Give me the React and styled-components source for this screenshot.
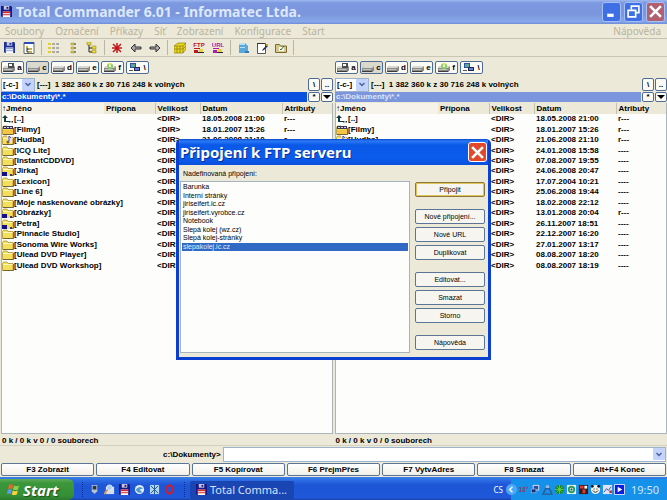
import React from "react";
import styled, { createGlobalStyle, css } from "styled-components";

const face = "#ece9d8";
const uiFont = '"Liberation Sans", Arial, sans-serif';
const titleFont = '"Noto Sans", "Open Sans", sans-serif';

const GlobalStyle = createGlobalStyle`
  * { box-sizing: border-box; }
  body { margin: 0; background: ${face}; }
  button, input, select { font: inherit; color: inherit; margin: 0; padding: 0; }
  svg { display: block; flex: none; }
`;

// --- Styled Components ---
const Screen = styled.div`
  min-height: 100vh;
  display: flex;
  flex-direction: column;
  background: ${face};
  color: #000;
  font: bold 8px/10px ${uiFont};
  white-space: nowrap;
`;

const TitleBar = styled.header`
  display: flex;
  align-items: center;
  gap: 3px;
  height: 24px;
  padding: 0 2px 1px 1px;
  background: linear-gradient(#9db8f0 0, #7c98e0 3px, #7b96dc 60%, #86a8ea 90%, #6f8cd8);
`;

const TitleText = styled.h1`
  flex: 1;
  margin: 0;
  padding-left: 1px;
  font: bold 14px/20px ${titleFont};
  color: #dde8fc;
`;

const CaptionButton = styled.button`
  display: grid;
  place-items: center;
  width: 19px;
  height: 20px;
  border: 1px solid ${(p) => (p.$bright ? "#fff" : "#a9c0f4")};
  border-radius: 3px;
  background: ${(p) => p.$bg};
`;

const MenuBar = styled.nav`
  display: flex;
  gap: 11px;
  height: 14px;
  padding: 0 6px 0 5px;
  font: 10px/13px ${titleFont};
  color: #b9b39c;
`;

const MenuItem = styled.button`
  border: 0;
  background: none;
  ${(p) => p.$end && css`margin-left: auto;`}
`;

const Toolbar = styled.div`
  display: flex;
  align-items: center;
  height: 19px;
  border-top: 1px solid #c5c2b4;
  border-bottom: 1px solid #c9c6b8;
`;

const ToolButton = styled.button`
  display: grid;
  place-items: center;
  width: 19px;
  height: 17px;
  border: 0;
  background: none;
`;

const ToolSeparator = styled.span`
  width: 1px;
  height: 15px;
  margin: 0 2px 0 3px;
  background: #b9b6a6;
`;

const Panels = styled.main`
  flex: 1;
  display: grid;
  grid-template-columns: 1fr 1fr;
  gap: 2px;
  padding: 4px 0 0 1px;
`;

const Panel = styled.section`
  display: flex;
  flex-direction: column;
  min-width: 0;
`;

const Drives = styled.div`
  display: flex;
  gap: 2px;
  height: 16px;
`;

const DriveButton = styled.button`
  display: flex;
  align-items: center;
  justify-content: center;
  gap: 2px;
  width: 23px;
  height: 13px;
  border: 1px solid #4f6d94;
  border-radius: 2px;
  background: ${(p) => (p.$on ? "#dcd9cc" : "#fbfaf5")};
`;

const InfoRow = styled.div`
  display: flex;
  align-items: center;
  gap: 1px;
  height: 15px;
`;

const DriveSelect = styled.div`
  display: flex;
  align-items: center;
  width: 34px;
  height: 14px;
  margin-right: 1px;
  border: 1px solid #9db3cc;
  background: #fff;

  select {
    width: 18px;
    flex: 1;
    height: 12px;
    padding-left: 1px;
    border: 0;
    background: none;
    appearance: none;
  }
`;

const Chevron = styled.span`
  display: grid;
  place-items: center;
  width: 12px;
  height: 12px;
  border-radius: 1px;
  background: #c3d3fb;
  pointer-events: none;
`;

const FreeSpace = styled.span`
  flex: 1;
`;

const SmallButton = styled.button`
  display: grid;
  place-items: center;
  width: 12px;
  height: ${(p) => (p.$tall ? 13 : 10)}px;
  border: 1px solid #4f6d94;
  border-radius: 2px;
  background: #fbfaf5;
  line-height: 8px;
`;

const PathRow = styled.div`
  display: flex;
  gap: 1px;
  height: 11px;
`;

const Path = styled.div`
  flex: 1;
  height: 10px;
  padding-left: 1px;
  color: ${(p) => (p.$active ? "#fff" : "#dbe4fa")};
  background: ${(p) => (p.$active ? "#0a4fe0" : "#7b96dc")};
`;

const FileList = styled.div`
  flex: 1;
  border: 1px solid #a9b4bd;
  border-top: 0;
  background: #fdfefc;
`;

const FileTable = styled.table`
  width: 100%;
  height: 168px;
  table-layout: fixed;
  border-collapse: collapse;

  th, td {
    padding: 0 0 0 2px;
    text-align: left;
    overflow: hidden;
  }
  th {
    height: 11px;
    background: ${face};
    border-left: 1px solid #c5c2b4;
  }
  th:first-child {
    padding-left: 0;
    border-left: 0;
    background: #f5f3ea;
  }
  th:nth-child(2) {
    border-left: 0;
  }
`;

const Name = styled.span`
  display: flex;
  align-items: center;
  height: 10px;
  margin-left: -2px;
`;

const StatusRow = styled.div`
  display: grid;
  grid-template-columns: 1fr 1fr;
  gap: 2px;
  height: 12px;
  padding: 2px 0 0 2px;
  border-bottom: 1px solid #d4d1c2;
`;

const CommandRow = styled.div`
  display: flex;
  align-items: center;
  gap: 2px;
  height: 17px;
  padding-right: 1px;

  label {
    flex: 1;
    text-align: right;
  }
`;

const CommandBox = styled.div`
  flex: 2;
  display: flex;
  height: 15px;
  border: 1px solid #9db3cc;
  background: #fff;

  input {
    flex: 1;
    border: 0;
    outline: 0;
    background: none;
  }
`;

const FunctionKeys = styled.div`
  display: flex;
  gap: 2px;
  padding: 0 1px 1px;
`;

const FunctionKey = styled.button`
  flex: 1;
  height: 13px;
  border: 1px solid #5a7596;
  border-radius: 2px;
  background: linear-gradient(#fff, #f0efe8);
`;

const Taskbar = styled.footer`
  display: flex;
  align-items: center;
  height: 23px;
  padding-top: 2px;
  color: #fff;
  font: 11px/18px ${titleFont};
  background: linear-gradient(#3a80e8 0, #2a68e0 4px, #1d55d6 8px, #1f58da 90%, #1941a5);
`;

const StartButton = styled.button`
  display: flex;
  align-items: center;
  gap: 3px;
  align-self: stretch;
  width: 74px;
  padding-left: 7px;
  border: 0;
  border-radius: 0 6px 6px 0;
  background: linear-gradient(#5eac56 0, #3c963c 4px, #359035 80%, #2a7a2c);
  color: #fff;
  font: italic bold 15px/18px ${titleFont};
  text-shadow: 1px 1px 1px #1d4f1d;
`;

const Grip = styled.span`
  width: 1px;
  height: 15px;
  margin: 0 ${(p) => p.$after}px 0 ${(p) => p.$before}px;
  border-left: 1px dotted #0c2f8f;
`;

const QuickLaunch = styled.div`
  display: flex;
  gap: 4px;
`;

const IconButton = styled.button`
  border: 0;
  background: none;
`;

const TaskButton = styled.button`
  display: flex;
  align-items: center;
  gap: 3px;
  width: 104px;
  height: 18px;
  padding-left: 6px;
  border: 0;
  border-radius: 2px;
  background: #1a46b4;
  color: #d6e2fb;
`;

const Language = styled.span`
  margin-left: auto;
  padding-right: 3px;
  font-size: 8px;
`;

const Tray = styled.div`
  display: flex;
  align-items: center;
  align-self: stretch;
  gap: 1px;
  width: 161px;
  background: linear-gradient(90deg, transparent 5px, #1591ea 5px);
`;

const Clock = styled.time`
  margin-left: 5px;
  color: #cfe6fb;
`;

const Overlay = styled.div`
  position: fixed;
  inset: 0;
  display: grid;
  place-items: center;
  padding-bottom: 1px;
`;

const Dialog = styled.div`
  width: 315px;
  border: solid #0a3fd0;
  border-width: 0 3px 3px 3px;
  border-radius: 5px 5px 0 0;
  background: ${face};
  font: 7px/9px ${uiFont};
  overflow: hidden;
  white-space: nowrap;
`;

const DialogTitle = styled.div`
  display: flex;
  align-items: center;
  justify-content: space-between;
  height: 26px;
  padding: 0 1px;
  background: linear-gradient(#0a45c8 0, #2a7af8 2px, #0a58e6 6px, #0a5cee 70%, #0a50dc);

  h2 {
    margin: 0;
    font: bold 15px/20px ${titleFont};
    color: #fff;
    text-shadow: 1px 1px 0 #0a2f9a;
  }
`;

const DialogBody = styled.div`
  display: grid;
  grid-template-columns: 1fr 70px;
  column-gap: 5px;
  padding: 4px 3px 4px 1px;

  label {
    grid-column: 1 / -1;
    height: 12px;
    padding-left: 3px;
  }
`;

const ConnectionList = styled.select`
  height: 172px;
  padding: 1px;
  border: 1px solid #a5b5c0;
  border-radius: 0;
  outline: 0;
  background: #fdfefc;
  overflow: hidden;

  option {
    height: 8px;
    min-height: 8px;
    padding: 0 1px;
    line-height: 8px;
    font-size: 7px;
  }
  option:nth-child(odd) {
    height: 9px;
  }
  option:checked {
    background: #316ac5 linear-gradient(#316ac5, #316ac5);
    color: #dfeafc;
  }
`;

const DialogButtons = styled.div`
  display: flex;
  flex-direction: column;
  gap: 3px;
  padding-top: 1px;
`;

const DialogButton = styled.button`
  height: 15px;
  margin-top: ${(p) => p.$gap || 0}px;
  border: 1px solid ${(p) => (p.$default ? "#8a7a3c" : "#5a7596")};
  border-radius: 2px;
  background: #f6f5ef;
  ${(p) => p.$default && css`box-shadow: inset 0 0 0 1px #e4c25c;`}
`;

// --- Icons ---
const Disk = ({ size = 11, body = "#17178c", label = "#d42a2a" }) => (
  <svg width={size} height={size} viewBox="0 0 12 12">
    <path d="M0 0h11l1 1v11H1l-1-1z" fill={body} />
    <path d="M3 0h6v4H3z" fill="#c8c8d8" />
    <path d="M6 1h2v2H6z" fill={body} />
    <path d="M2 6h8v6H2z" fill="#fff" />
    <path d="M2 6h8v2H2zM2 9h8v1H2z" fill={label} />
  </svg>
);

const SmallChevron = () => (
  <svg width="6" height="5" viewBox="0 0 6 5">
    <path d="M0.5 1 3 3.5 5.500 1" fill="none" stroke="#4a62a0" strokeWidth="1.500" />
  </svg>
);

const Cross = ({ size }) => (
  <svg width={size} height={size} viewBox="0 0 12 12">
    <path d="M1 1l10 10M11 1 1 11" stroke="#fff" strokeWidth="2.400" />
  </svg>
);

const FolderShape = () => (
  <>
    <path d="M.5 2.500 1.500 1H5l1 1.500h5v7H.500z" fill="#f3df5c" stroke="#a8923a" strokeWidth=".8" />
    <path d="M1 3h9.500v1H1z" fill="#fff7b8" />
    <path d="M1 9.500h10.500V3" stroke="#5c5430" strokeWidth=".8" fill="none" />
  </>
);

const FileIcon = ({ kind }) => (
  <svg width="12" height="10" viewBox="0 0 12 10">
    {kind === "up" && (
      <path d="M3 1l3 3H4v3h3v1H2V4H0zM7 7h1.500v1.500H7zM9.500 7H11v1.500H9.500z" fill="#123c3c" />
    )}
    {kind !== "up" && <FolderShape />}
    {kind === "film" && (
      <>
        <path d="M1 1h10v3H1z" fill="#3b3554" />
        <path d="M2 2h2v1H2zM5 2h2v1H5zM8 2h2v1H8z" fill="#c9d2ee" />
        <path d="M1 5h10v4H1z" fill="#f4c443" />
      </>
    )}
    {kind === "music" && (
      <>
        <path d="M5 1h5v7H5z" fill="#dfe3f4" />
        <path d="M7 6V1l2 2" stroke="#5a4bb0" fill="none" />
        <circle cx="6" cy="7" r="1.500" fill="#8a5a2a" />
      </>
    )}
    {kind === "shared" && (
      <>
        <path d="M0 6h5v4H0z" fill="#10108c" />
        <path d="M5 8h4v2H5z" fill="#f0d0b0" />
        <path d="M8 8h2v2H8z" fill="#3a3a6a" />
      </>
    )}
  </svg>
);

const DriveIcon = ({ kind }) => (
  <svg width="12" height="9" viewBox="0 0 12 9">
    {kind === "net" ? (
      <>
        <path d="M1 0h6v5H1z" fill="#2f50a8" />
        <path d="M2 1h4v3H2z" fill="#5aa890" />
        <path d="M5 4h6v4H5z" fill="#26264c" />
        <path d="M6 5h4v2H6z" fill="#5a82d8" />
        <path d="M0 7h4v1H0z" fill="#555" />
      </>
    ) : (
      <>
        <path d="M0 5l2-2h10v3L10 8H0z" fill="#8b8b88" />
        <path d="M0 5l2-2h10l-2 2z" fill="#d8d8d2" />
        <path d="M1 6h8v1H1z" fill="#c2c2bc" />
        <path d="M0 8h10l2-2v1l-2 2H0z" fill="#3c3c3c" />
      </>
    )}
    {kind === "floppy" && <path d="M5 0h6v5H5zM6 1v2h3V1z" fill="#4c4c54" fillRule="evenodd" />}
    {kind === "cd" && (
      <>
        <circle cx="6" cy="3" r="3" fill="#8ccf6a" />
        <path d="M6 3 4 0l4 0z" fill="#f2e860" />
        <circle cx="6" cy="3" r="1" fill="#fff" />
      </>
    )}
  </svg>
);

const Tree = () => (
  <>
    <path d="M1 0h4v3H1zM6 4h4v3H6zM6 8h4v3H6z" fill="#e8d83a" stroke="#8a7a1a" strokeWidth=".5" />
    <path d="M3 3v7h3M3 6h3" stroke="#222" fill="none" />
  </>
);

const Transfer = ({ label, color }) => (
  <>
    <text x="6" y="5" fontSize="6" fontWeight="bold" textAnchor="middle" fill={color}>{label}</text>
    <path d="M1 6h6v1H1zM1 8h4v3H1z" fill={color} />
    <path d="M6 7h4v3H6z" fill="#ecd23c" />
    <path d="M5 10h6v1H5z" fill="#223" />
  </>
);

const toolShapes = {
  tree: (
    <>
      <path d="M1 .5h10v11H1z" fill="#fff" stroke="#666" />
      <path d="M1 0h10v2H1z" fill="#2b4fb0" />
      <path d="M3 4h2v2H3zM6 6h3v2H6zM6 9h3v2H6z" fill="#c8b52a" />
      <path d="M4 6v4h2M4 7h2" stroke="#222" fill="none" />
    </>
  ),
  brief: (
    <>
      <path d="M0 1h3v2H0zM0 5h3v2H0zM0 9h3v2H0z" fill="#e0ce30" />
      <path d="M4 2h3M4 6h3M4 10h3M8 2h3M8 6h3M8 10h3" stroke="#777" strokeDasharray="2 1" />
      <path d="M5 1h2v2H5zM9 1h2v2H9zM5 5h2v2H5zM9 5h2v2H9zM5 9h2v2H5zM9 9h2v2H9z" fill="#aaa" />
    </>
  ),
  full: (
    <>
      <path d="M4 1h3v2H4zM4 5h3v2H4zM4 9h3v2H4z" fill="#e4d132" stroke="#998719" strokeWidth=".5" />
      <path d="M7 2h2M7 6h2M7 10h2" stroke="#333" />
    </>
  ),
  folders: <Tree />,
  refresh: (
    <path d="M6 1v10M1 6h10M2 2l8 8M10 2l-8 8" stroke="#c01818" strokeWidth="1.500" />
  ),
  back: <path d="M1 6 5 2v3h6v2H5v3z" fill="#aaa" stroke="#333" />,
  forward: <path d="M11 6 7 2v3H1v2h6v3z" fill="#aaa" stroke="#333" />,
  pack: (
    <>
      <path d="M0 4 4 1h8v6L9 11H0z" fill="#e8d71e" stroke="#8d7d10" strokeWidth=".7" />
      <path d="M0 4h9l3-3M9 4v7M3 4v7M6 4v7M0 7h9l3-3" stroke="#8d7d10" strokeWidth=".7" fill="none" />
    </>
  ),
  ftp: <Transfer label="FTP" color="#c01818" />,
  url: <Transfer label="URL" color="#b018b0" />,
  find: (
    <>
      <path d="M2 1h6l3 3v7H2z" fill="#58a8dc" />
      <path d="M2 1h6v2H2zM3 5h5v1H3z" fill="#b8e0f4" />
      <path d="M8 9h4v2H8z" fill="#3a78b8" />
    </>
  ),
  edit: (
    <>
      <path d="M1.500 1.500h8v10h-8z" fill="#fff" stroke="#555" />
      <path d="M1 1h8v1H1z" fill="#333" />
      <path d="M11 3 7 7l-1 2 2-1 4-4z" fill="#1c2450" />
      <path d="M10 2h2v2h-2z" fill="#c89a28" />
    </>
  ),
  notes: (
    <>
      <path d="M.5 2.500h4l1 1.500h6v6.500H.500z" fill="#d6c88a" stroke="#7a6c34" />
      <path d="M4 5h5v4H4z" fill="#fff" />
      <path d="M5 7l1 1 3-4" stroke="#2a6a2a" fill="none" />
    </>
  ),
};

const ToolIcon = ({ name }) =>
  name === "save" ? (
    <Disk body="#1f2f98" label="#8aa0d8" />
  ) : (
    <svg width="12" height="12" viewBox="0 0 12 12" fontFamily="Liberation Sans, sans-serif">
      {toolShapes[name]}
    </svg>
  );

const Flag = () => (
  <svg width="13" height="13" viewBox="0 0 13 13">
    <path d="M2 2q2-1.500 4 0L5 6Q3 5 1 6z" fill="#f0642c" />
    <path d="M7 2.500q2 1.500 5 0L11 6.500q-3 1-5 0z" fill="#8fd04a" />
    <path d="M.8 7q2-1.500 4 0l-1 4Q2 10-.2 11z" fill="#5a9cf4" />
    <path d="M5.800 7.500q2 1.500 5 0l-1 4q-3 1-5 0z" fill="#f8d23c" />
  </svg>
);

const launchShapes = [
  <><path d="M3 1h6v7L6 11 3 8z" fill="#b8c4d4" /><path d="M4 2h4v4H4z" fill="#23354f" /></>,
  <><path d="M2 3h9v8H2z" fill="#d6dee8" /><circle cx="6" cy="4" r="3" fill="#a9d0f2" stroke="#eef" /><path d="M4 6 0 11" stroke="#c89a6a" strokeWidth="2" /></>,
  null,
  <><circle cx="6" cy="6" r="5" fill="#e2ecf4" /><path d="M2 6q4-5 8-1l-4 1 3 3q-5 2-7-3" fill="#4a98cc" /></>,
  <><path d="M1 1h10v10H1z" fill="#b4d4ee" /><path d="M2 2l4 4-4 4M10 2 6 6l4 4M6 1v10" stroke="#1a5896" fill="none" /></>,
  <><ellipse cx="6" cy="6" rx="3.500" ry="4.500" fill="none" stroke="#cc2030" strokeWidth="2.400" /></>,
];

const trayShapes = [
  <text x="6" y="9" fontSize="7" fontWeight="bold" textAnchor="middle" fill="#a03070">18°</text>,
  <><path d="M3 1h7v6H3z" fill="#dfe8f4" /><path d="M4 2h5v4H4z" fill="#2a48a8" /><path d="M1 5h6v5H1z" fill="#8aa2cc" /><path d="M2 6h4v3H2z" fill="#1a2a78" /></>,
  <><circle cx="6" cy="3" r="2" fill="#9ab8d8" /><path d="M4 5h4l3 6H1z" fill="none" stroke="#2a5a92" strokeWidth="1.500" /></>,
  <><circle cx="6" cy="6" r="5" fill="#1c8a2a" /><path d="M6 1v10M1 6h10M3 3l6 6M9 3 3 9" stroke="#7ce04a" strokeWidth=".7" /></>,
  <><path d="M1 1h10v10H1z" fill="#e8f4ec" /><circle cx="6" cy="6" r="3" fill="none" stroke="#2a9a6a" strokeWidth="2" /><path d="M5 5h2v2H5z" fill="#14503a" /></>,
  <><path d="M1 1h10v10H1z" fill="#3a1a1a" /><path d="M2 2h4v3H2zM5 6h3v4H5z" fill="#e83a2a" /><path d="M7 2h3v3H7z" fill="#fff" /></>,
  <><circle cx="6" cy="6" r="5" fill="#f4f4ec" /><circle cx="2.500" cy="2.500" r="1.500" fill="#111" /><circle cx="9.500" cy="2.500" r="1.500" fill="#111" /><path d="M3 7q3 4 6 0" stroke="#222" fill="none" /><path d="M4 5h1v1H4zM7 5h1v1H7z" fill="#111" /></>,
  <><path d="M1 1h10v10H1z" fill="#dfe2f2" /><path d="M2 9l3-4 2 2 3-4" stroke="#3a48a8" fill="none" /><path d="M8 7h3v3H8z" fill="#c03a3a" /></>,
  <><path d="M.5 .5h11v11H.500z" fill="#0a1ee0" stroke="#dfe8ff" /><path d="M4 3l5 3-5 3z" fill="#fff" /></>,
];

const Glyph = ({ size = 11, children }) => (
  <svg width={size} height={size} viewBox="0 0 12 12" fontFamily="Liberation Sans, sans-serif">
    {children}
  </svg>
);

// --- Data ---
const menus = ["Soubory", "Označení", "Příkazy", "Síť", "Zobrazení", "Konfigurace", "Start"];

const toolGroups = [
  ["save", "tree"],
  ["brief", "full", "folders"],
  ["refresh", "back", "forward"],
  ["pack", "ftp", "url"],
  ["find", "edit", "notes"],
];

const drives = [
  ["a", "floppy"],
  ["c", "hdd"],
  ["d", "hdd"],
  ["e", "hdd"],
  ["f", "cd"],
  ["\\", "net"],
];

const files = [
  ["[..]", "up", "18.05.2008 21:00", "r---"],
  ["[Filmy]", "film", "18.01.2007 15:26", "r---"],
  ["[Hudba]", "music", "21.06.2008 21:10", "r---"],
  ["[ICQ Lite]", "dir", "24.01.2008 15:58", "----"],
  ["[InstantCDDVD]", "dir", "07.08.2007 19:55", "----"],
  ["[Jirka]", "shared", "24.06.2008 20:47", "----"],
  ["[Lexicon]", "dir", "17.07.2004 10:21", "----"],
  ["[Line 6]", "dir", "25.06.2008 19:44", "----"],
  ["[Moje naskenované obrázky]", "dir", "18.02.2008 22:12", "----"],
  ["[Obrázky]", "shared", "13.01.2008 20:04", "r---"],
  ["[Petra]", "shared", "26.11.2007 18:51", "----"],
  ["[Pinnacle Studio]", "dir", "22.12.2007 16:20", "----"],
  ["[Sonoma Wire Works]", "dir", "27.01.2007 13:17", "----"],
  ["[Ulead DVD Player]", "dir", "08.08.2007 18:20", "----"],
  ["[Ulead DVD Workshop]", "dir", "08.08.2007 18:19", "----"],
];

const keys = [
  "F3 Zobrazit",
  "F4 Editovat",
  "F5 Kopírovat",
  "F6 PřejmPřes",
  "F7 VytvAdres",
  "F8 Smazat",
  "Alt+F4 Konec",
];

const connections = [
  "Barunka",
  "Interní stránky",
  "jiriseifert.ic.cz",
  "jiriseifert.vyrobce.cz",
  "Notebook",
  "Slepá kolej (wz.cz)",
  "Slepá kolej-stránky",
  "slepakolej.ic.cz",
];

const dialogButtons = [
  ["Připojit", 0],
  ["Nové připojení...", 9],
  ["Nové URL", 0],
  ["Duplikovat", 0],
  ["Editovat...", 9],
  ["Smazat", 0],
  ["Storno", 0],
  ["Nápověda", 9],
];

const FilePanel = ({ active }) => (
  <Panel>
    <Drives>
      {drives.map(([letter, kind]) => (
        <DriveButton key={letter} $on={letter === "c"}>
          <DriveIcon kind={kind} />
          {letter}
        </DriveButton>
      ))}
    </Drives>
    <InfoRow>
      <DriveSelect>
        <select aria-label="Disk">
          <option>[-c-]</option>
        </select>
        <Chevron><SmallChevron /></Chevron>
      </DriveSelect>
      <FreeSpace>[---]&nbsp; 1 382 360 k z 30 716 248 k volných</FreeSpace>
      <SmallButton $tall>\</SmallButton>
      <SmallButton $tall>..</SmallButton>
    </InfoRow>
    <PathRow>
      <Path $active={active}>c:\Dokumenty\*.*</Path>
      <SmallButton>*</SmallButton>
      <SmallButton aria-label="Historie">
        <svg width="8" height="4" viewBox="0 0 8 4"><path d="M0 0h8L4 4z" /></svg>
      </SmallButton>
    </PathRow>
    <FileList>
      <FileTable>
        <colgroup>
          <col style={{ width: 102 }} />
          <col style={{ width: 51 }} />
          <col style={{ width: 45 }} />
          <col style={{ width: 82 }} />
          <col />
        </colgroup>
        <thead>
          <tr>
            <th>↑Jméno</th>
            <th>Přípona</th>
            <th>Velikost</th>
            <th>Datum</th>
            <th>Atributy</th>
          </tr>
        </thead>
        <tbody>
          {files.map(([name, kind, date, attrs]) => (
            <tr key={name}>
              <td colSpan={2}>
                <Name>
                  <FileIcon kind={kind} />
                  {name}
                </Name>
              </td>
              <td>&lt;DIR&gt;</td>
              <td>{date}</td>
              <td>{attrs}</td>
            </tr>
          ))}
        </tbody>
      </FileTable>
    </FileList>
  </Panel>
);

const FtpDialog = () => (
  <Overlay>
    <Dialog role="dialog" aria-labelledby="ftp-title">
      <DialogTitle>
        <h2 id="ftp-title">Připojení k FTP serveru</h2>
        <CaptionButton $bright $bg="#e2492a" aria-label="Zavřít"><Cross size={13} /></CaptionButton>
      </DialogTitle>
      <DialogBody>
        <label htmlFor="connections">Nadefinovaná připojení:</label>
        <ConnectionList id="connections" size={8} defaultValue="slepakolej.ic.cz">
          {connections.map((c) => (
            <option key={c}>{c}</option>
          ))}
        </ConnectionList>
        <DialogButtons>
          {dialogButtons.map(([label, gap], i) => (
            <DialogButton key={label} $gap={gap} $default={i === 0}>{label}</DialogButton>
          ))}
        </DialogButtons>
      </DialogBody>
    </Dialog>
  </Overlay>
);

const App = () => (
  <Screen>
    <GlobalStyle />
    <TitleBar>
      <Disk />
      <TitleText>Total Commander 6.01 - Informatec Ltda.</TitleText>
      <CaptionButton $bg="#3f6fe4" aria-label="Minimalizovat">
        <Glyph size={13}><path d="M2 8h6v3H2z" fill="#fff" /></Glyph>
      </CaptionButton>
      <CaptionButton $bg="#3f6fe4" aria-label="Obnovit">
        <Glyph size={13}>
          <path d="M4 4V1h7v6H8M1 5h7v6H1z" fill="none" stroke="#fff" strokeWidth="1.500" />
        </Glyph>
      </CaptionButton>
      <CaptionButton $bg="#b0606e" aria-label="Zavřít"><Cross size={13} /></CaptionButton>
    </TitleBar>
    <MenuBar>
      {menus.map((m) => (
        <MenuItem key={m}>{m}</MenuItem>
      ))}
      <MenuItem $end>Nápověda</MenuItem>
    </MenuBar>
    <Toolbar>
      {toolGroups.map((group) => (
        <React.Fragment key={group[0]}>
          {group.map((name) => (
            <ToolButton key={name} aria-label={name}><ToolIcon name={name} /></ToolButton>
          ))}
          <ToolSeparator />
        </React.Fragment>
      ))}
    </Toolbar>
    <Panels>
      <FilePanel active />
      <FilePanel />
    </Panels>
    <StatusRow>
      <span>0 k / 0 k v 0 / 0 souborech</span>
      <span>0 k / 0 k v 0 / 0 souborech</span>
    </StatusRow>
    <CommandRow>
      <label htmlFor="command">c:\Dokumenty&gt;</label>
      <CommandBox>
        <input id="command" type="text" />
        <Chevron><SmallChevron /></Chevron>
      </CommandBox>
    </CommandRow>
    <FunctionKeys>
      {keys.map((k) => (
        <FunctionKey key={k}>{k}</FunctionKey>
      ))}
    </FunctionKeys>
    <Taskbar>
      <StartButton><Flag />Start</StartButton>
      <Grip $before={8} $after={6} />
      <QuickLaunch>
        {launchShapes.map((shape, i) => (
          <IconButton key={i} aria-label={"Program " + (i + 1)}>
            {shape ? <Glyph>{shape}</Glyph> : <Disk />}
          </IconButton>
        ))}
      </QuickLaunch>
      <Grip $before={9} $after={5} />
      <TaskButton><Disk />Total Comma...</TaskButton>
      <Language>CS</Language>
      <Tray>
        <Glyph>
          <circle cx="6" cy="6" r="6" fill="#4aa8f4" />
          <path d="M7 3 4 6l3 3" stroke="#fff" strokeWidth="1.500" fill="none" />
        </Glyph>
        {trayShapes.map((shape, i) => (
          <Glyph key={i}>{shape}</Glyph>
        ))}
        <Clock>19:50</Clock>
      </Tray>
    </Taskbar>
    <FtpDialog />
  </Screen>
);

export default App;
